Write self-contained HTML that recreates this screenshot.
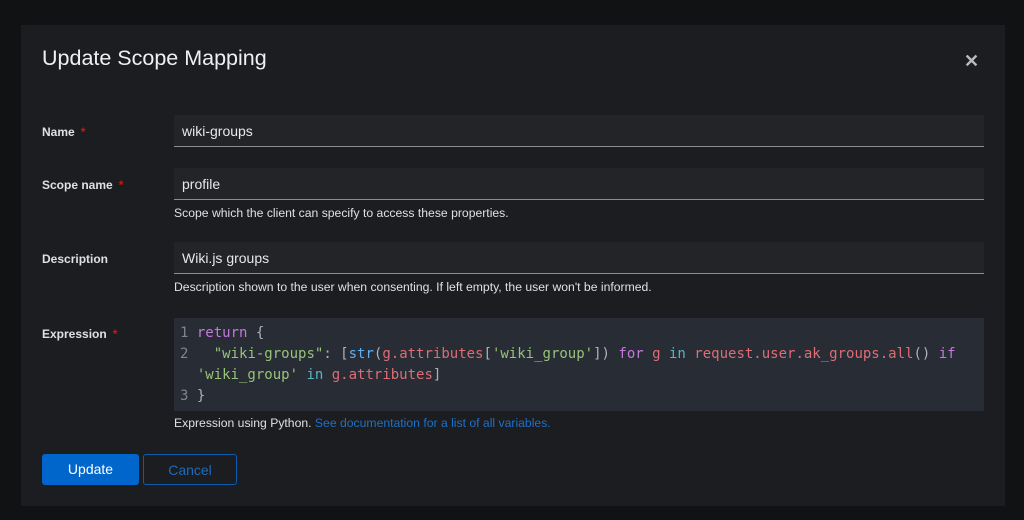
<!DOCTYPE html>
<html><head><style>
*{box-sizing:border-box;margin:0;padding:0}
body{width:1024px;height:520px;background:#111214;font-family:"Liberation Sans",sans-serif;position:relative;overflow:hidden;color:#e0e0e0}
.modal{position:absolute;left:21px;top:25px;width:984px;height:481px;background:#1b1d21}
.title{position:absolute;left:21px;top:21px;font-size:21.5px;color:#f0f0f0}
.close{position:absolute;left:943px;top:26px;font-size:18px;color:#b8bbbe;font-weight:bold}
.label{position:absolute;left:21px;font-size:12px;font-weight:bold;color:#e0e0e0}
.label span{color:#c9190b;margin-left:6px}
.input{position:absolute;left:153px;width:810px;height:32px;background:#222428;border-bottom:1px solid #8a8d90;font-size:14px;padding:8px 8px;color:#e8e8e8}
.help{position:absolute;left:153px;font-size:12.2px;color:#e0e0e0}
.code{position:absolute;left:153px;top:293px;width:810px;height:93px;background:#282c34;font-family:"DejaVu Sans Mono",monospace;font-size:14px;line-height:21px;padding:5px 0 0 6px;white-space:pre;color:#abb2bf}
.n{color:#7f848e}.k{color:#c678dd}.s{color:#98c379}.f{color:#61afef}.v{color:#e06c75}.i{color:#56b6c2}
.btn{position:absolute;top:429px;height:31px;font-size:14px;text-align:center;line-height:31px;border-radius:3px}
</style></head><body>
<div class="modal">
<div class="title">Update Scope Mapping</div>
<div class="close">✕</div>
<div class="label" style="top:100px">Name<span>*</span></div>
<div class="input" style="top:90px">wiki-groups</div>
<div class="label" style="top:153px">Scope name<span>*</span></div>
<div class="input" style="top:143px">profile</div>
<div class="help" style="top:181px">Scope which the client can specify to access these properties.</div>
<div class="label" style="top:227px">Description</div>
<div class="input" style="top:217px">Wiki.js groups</div>
<div class="help" style="top:255px">Description shown to the user when consenting. If left empty, the user won't be informed.</div>
<div class="label" style="top:302px">Expression<span>*</span></div>
<div class="code"><span class="n">1</span> <span class="k">return</span> {
<span class="n">2</span>   <span class="s">"wiki-groups"</span>: [<span class="f">str</span>(<span class="v">g.attributes</span>[<span class="s">'wiki_group'</span>]) <span class="k">for</span> <span class="v">g</span> <span class="i">in</span> <span class="v">request.user.ak_groups.all</span>() <span class="k">if</span>
  <span class="s">'wiki_group'</span> <span class="i">in</span> <span class="v">g.attributes</span>]
<span class="n">3</span> }</div>
<div class="help" style="top:391px">Expression using Python. <span style="color:#1f6fc5">See documentation for a list of all variables.</span></div>
<div class="btn" style="left:21px;width:97px;background:#0066cc;color:#fff">Update</div>
<div class="btn" style="left:122px;width:94px;border:1px solid #0b5cad;color:#1a6bc0">Cancel</div>
</div>
</body></html>
